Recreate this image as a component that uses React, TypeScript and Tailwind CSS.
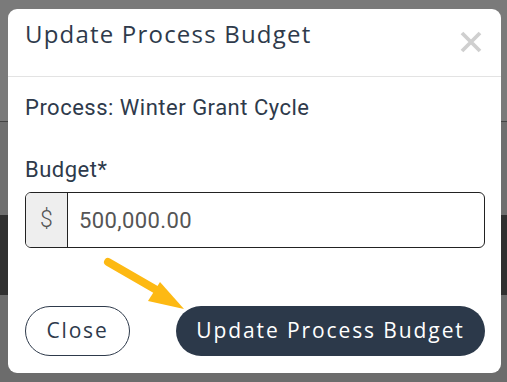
import React from "react";

export default function App() {
  return (
    <div className="relative w-[507px] h-[382px] overflow-hidden bg-[#6f6f6f]">
      {/* backdrop page */}
      <div className="absolute inset-0 flex flex-col">
        <div className="h-[122px] bg-[#7a7a7a] border-b border-[#444]" />
        <div className="h-[93px] bg-[#6f6f6f]" />
        <div className="h-[80px] bg-[#303030]" />
        <div className="flex-1 bg-[#6c6c6c]" />
      </div>
      <div className="absolute left-[8px] top-[9px] w-[493px] h-[364px] bg-white rounded-[9px] flex flex-col text-[#2e3a4b]">
        <div className="h-[68px] shrink-0 border-b border-[#e3e3e3] flex items-start justify-between pl-[17px] pr-[19px] pt-[9px]">
          <div className="text-[24px] leading-[32px] font-['Open_Sans',sans-serif] tracking-[1.2px]">Update Process Budget</div>
          <svg width="22" height="22" viewBox="0 0 22 22" className="mt-[13px]">
            <path d="M2 2 L20 20 M20 2 L2 20" stroke="#cfcfcf" strokeWidth="3.8" strokeLinecap="butt" />
          </svg>
        </div>
        <div className="pl-[17px] pr-[16px] font-['Roboto',sans-serif]">
          <div className="mt-[18px] text-[22px] leading-[26px] tracking-[0.5px]">Process: Winter Grant Cycle</div>
          <div className="mt-[36px] text-[22px] leading-[26px] tracking-[0.5px]">Budget*</div>
          <div className="mt-[9px] flex h-[56px] border border-[#222] rounded-[6px] overflow-hidden">
            <div className="w-[42px] bg-[#eeeeee] border-r border-[#222] flex items-center justify-center text-[23px] font-light text-[#555]">$</div>
            <div className="flex-1 flex items-center pl-[11px] text-[22px] tracking-[0.4px] text-[#555]">500,000.00</div>
          </div>
        </div>
        <div className="mt-auto mb-[17px] pl-[17px] pr-[16px] flex items-center justify-between font-['Open_Sans',sans-serif]">
          <button className="h-[50px] w-[105px] rounded-full border border-[#2e3a4b] text-[21px] tracking-[1.8px] text-[#2e3a4b] bg-white">Close</button>
          <button className="h-[50px] w-[309px] rounded-full bg-[#2c394a] text-[21px] tracking-[1.9px] text-white">Update Process Budget</button>
        </div>
      </div>
      <svg className="absolute left-0 top-0 pointer-events-none" width="507" height="382">
        <line x1="108" y1="262" x2="160" y2="292" stroke="#fdb913" strokeWidth="8" strokeLinecap="round" />
        <polygon points="160,282 148,301 184,309" fill="#fdb913" />
      </svg>
    </div>
  );
}
